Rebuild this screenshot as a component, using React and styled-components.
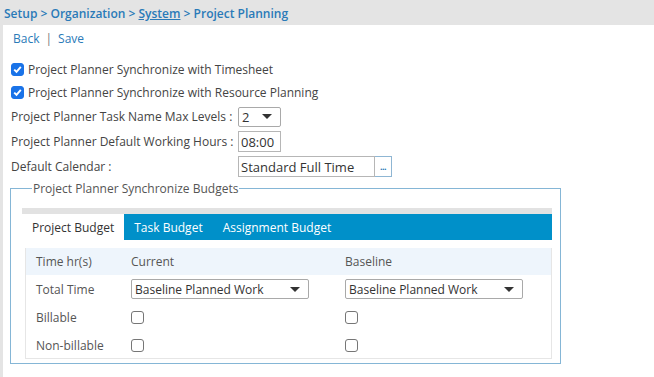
import React from 'react';
import styled, { createGlobalStyle } from 'styled-components';

const GlobalStyle = createGlobalStyle`
    body {
        margin: 0;
        background: #fff;
        font-family: "Open Sans", "Liberation Sans", sans-serif;
        font-size: 12px;
        color: #444;
    }
`;

const Page = styled.div`
    width: 654px;
    height: 377px;
    overflow: hidden;
    border-left: 3px solid #e4e4e4;
    box-sizing: border-box;
`;

const Breadcrumb = styled.div`
    background: #e4e4e4;
    height: 25px;
    margin-left: -3px;
    padding: 5px 0 0 4px;
    box-sizing: border-box;
    font-size: 12px;
    font-weight: 600;
    color: #2a7ab8;

    u {
        text-decoration: underline;
    }
`;

const Actions = styled.div`
    padding: 5px 0 0 10px;
    height: 24px;
    box-sizing: border-box;
    color: #2a7ab8;

    span.sep {
        margin: 0 6px;
        color: #777;
    }
`;

const Form = styled.div`
    padding: 9px 0 0 8px;
    display: flex;
    flex-direction: column;
`;

const Row = styled.div`
    display: flex;
    align-items: center;
    height: ${p => p.h || 25}px;
`;

const Label = styled.span`
    width: ${p => p.w ? `${p.w}px` : 'auto'};
    white-space: nowrap;
`;

const Check = ({ checked }) => (
    <CheckBox checked={checked}>
        {checked && (
            <svg width="9" height="9" viewBox="0 0 9 9">
                <path d="M1.2 4.6 L3.5 6.8 L7.8 1.8" stroke="#fff" strokeWidth="1.9" fill="none" />
            </svg>
        )}
    </CheckBox>
);

const CheckBox = styled.span`
    width: 13px;
    height: 13px;
    box-sizing: border-box;
    border-radius: 3px;
    display: inline-flex;
    align-items: center;
    justify-content: center;
    background: ${p => p.checked ? '#1a73e8' : '#fff'};
    border: 1px solid ${p => p.checked ? '#1a73e8' : '#767676'};
    margin-right: ${p => p.checked ? 4 : 0}px;
    flex-shrink: 0;
`;

const Select = styled.div`
    width: ${p => p.w}px;
    height: 20px;
    box-sizing: border-box;
    border: 1px solid #a9a9a9;
    border-radius: 2px;
    display: flex;
    align-items: center;
    justify-content: space-between;
    padding: 0 8px 0 3px;
    color: #333;
    font-size: ${p => p.fs || 12}px;
    background: #fff;
`;

const Arrow = styled.span`
    width: 0;
    height: 0;
    border-left: 5px solid transparent;
    border-right: 5px solid transparent;
    border-top: 5px solid #333;
`;

const TextInput = styled.div`
    width: ${p => p.w}px;
    height: 21px;
    box-sizing: border-box;
    border: 1px solid #b6b6b6;
    display: flex;
    align-items: center;
    padding: 0 2px;
    color: #333;
    font-size: 13px;
`;

const CalendarGroup = styled.div`
    display: flex;
`;

const Ellipsis = styled.div`
    width: 17px;
    height: 21px;
    box-sizing: border-box;
    border: 1px solid #8fb6d3;
    border-left: none;
    display: flex;
    align-items: flex-end;
    justify-content: center;
    padding-bottom: 5px;
    color: #2a7ab8;
    font-size: 9px;
    line-height: 1;
    font-weight: bold;
    letter-spacing: -0.5px;
`;

const Fieldset = styled.fieldset`
    margin: 1px 0 0 -1px;
    width: 551px;
    height: 184px;
    box-sizing: border-box;
    border: 1px solid #85b6d6;
    padding: 11px 8px 0 11px;
    min-inline-size: 0;

    legend {
        padding: 0 1px;
        margin-left: 10px;
        color: #555;
        font-size: 12px;
    }
`;

const TabStrip = styled.div`
    border-top: 6px solid #e2e2e2;
    background: #0090c9;
    height: 26px;
    display: flex;
`;

const Tab = styled.div`
    padding: 0 10px;
    display: flex;
    align-items: center;
    font-size: 12px;
    background: ${p => p.active ? '#fff' : 'transparent'};
    color: ${p => p.active ? '#333' : '#fff'};
`;

const Panel = styled.div`
    padding: 8px 0 0 3px;
`;

const Table = styled.div`
    border: 1px solid #e6e6e6;
    border-top: none;
    box-sizing: border-box;
`;

const TRow = styled.div`
    display: grid;
    grid-template-columns: 96px 214px 1fr;
    align-items: center;
    height: ${p => p.h}px;
    background: ${p => p.head ? '#eef5fc' : '#fff'};
`;

const Cell = styled.div`
    padding-left: ${p => p.first ? 10 : 9}px;
    color: #555;
    display: flex;
`;

export default function App() {
    return (
        <Page>
            <GlobalStyle />
            <Breadcrumb>
                Setup &gt; Organization &gt; <u>System</u> &gt; Project Planning
            </Breadcrumb>
            <Actions>
                Back<span className="sep">|</span>Save
            </Actions>
            <Form>
                <Row h={23}>
                    <Check checked />
                    <Label>Project Planner Synchronize with Timesheet</Label>
                </Row>
                <Row h={23}>
                    <Check checked />
                    <Label>Project Planner Synchronize with Resource Planning</Label>
                </Row>
                <Row h={25}>
                    <Label w={227}>Project Planner Task Name Max Levels :</Label>
                    <Select w={43} fs={13}>2<Arrow /></Select>
                </Row>
                <Row h={25}>
                    <Label w={227}>Project Planner Default Working Hours :</Label>
                    <TextInput w={43}>08:00</TextInput>
                </Row>
                <Row h={25}>
                    <Label w={227}>Default Calendar :</Label>
                    <CalendarGroup>
                        <TextInput w={137}>Standard Full Time</TextInput>
                        <Ellipsis>...</Ellipsis>
                    </CalendarGroup>
                </Row>
                <Fieldset>
                    <legend>Project Planner Synchronize Budgets</legend>
                    <TabStrip>
                        <Tab active>Project Budget</Tab>
                        <Tab>Task Budget</Tab>
                        <Tab>Assignment Budget</Tab>
                    </TabStrip>
                    <Panel>
                        <Table>
                            <TRow head h={27}>
                                <Cell first>Time hr(s)</Cell>
                                <Cell>Current</Cell>
                                <Cell>Baseline</Cell>
                            </TRow>
                            <TRow h={28}>
                                <Cell first>Total Time</Cell>
                                <Cell><Select w={178}>Baseline Planned Work<Arrow /></Select></Cell>
                                <Cell><Select w={178}>Baseline Planned Work<Arrow /></Select></Cell>
                            </TRow>
                            <TRow h={29}>
                                <Cell first>Billable</Cell>
                                <Cell><Check /></Cell>
                                <Cell><Check /></Cell>
                            </TRow>
                            <TRow h={26}>
                                <Cell first>Non-billable</Cell>
                                <Cell><Check /></Cell>
                                <Cell><Check /></Cell>
                            </TRow>
                        </Table>
                    </Panel>
                </Fieldset>
            </Form>
        </Page>
    );
}
